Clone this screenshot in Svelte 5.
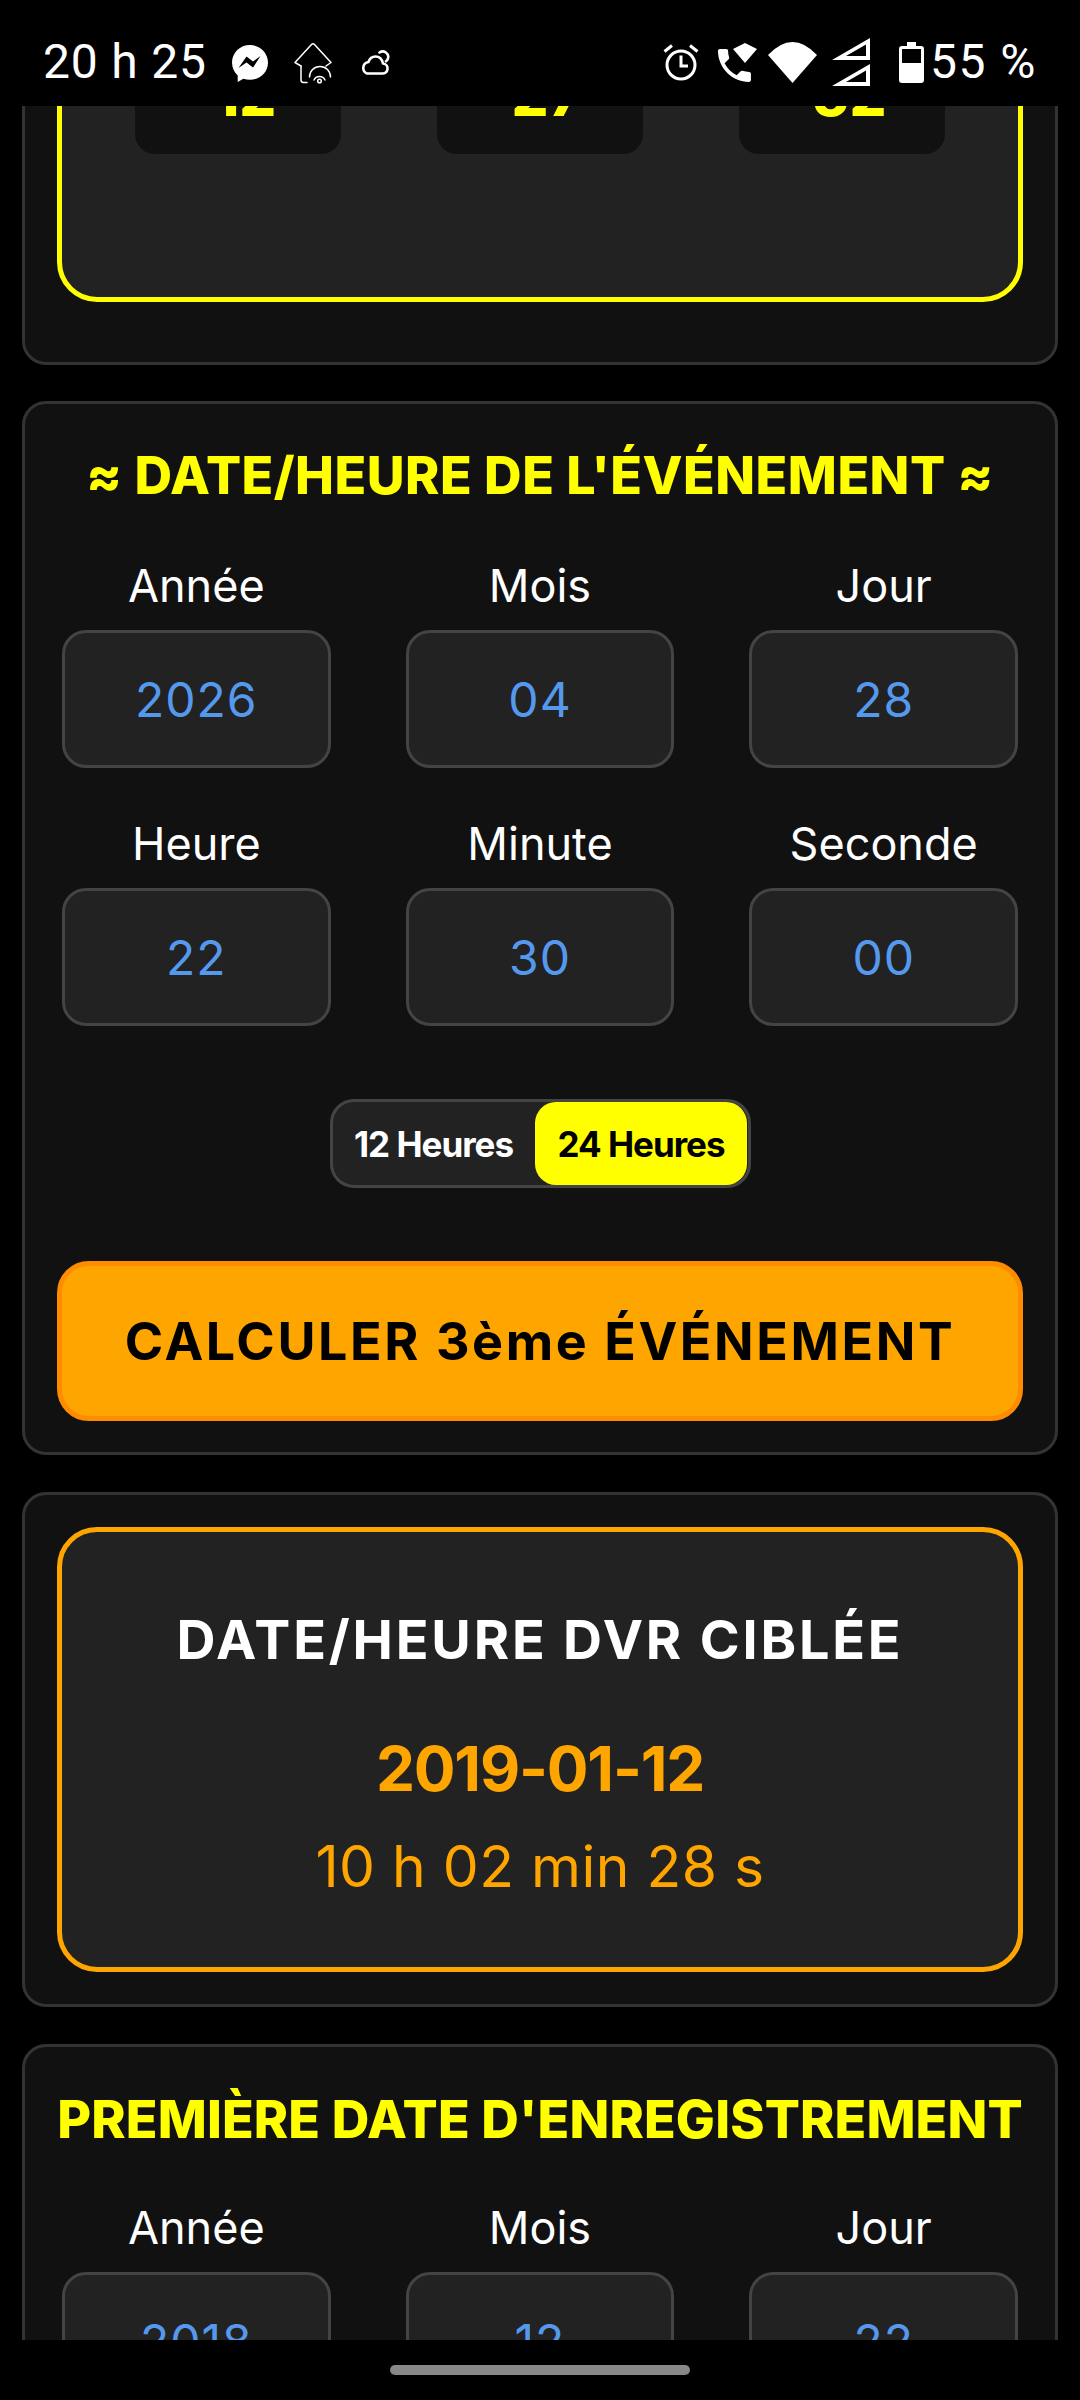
<script>
  const topCells = ["12", "27", "52"];
  const eventRows = [
    [
      { label: "Année", value: "2026" },
      { label: "Mois", value: "04" },
      { label: "Jour", value: "28" },
    ],
    [
      { label: "Heure", value: "22" },
      { label: "Minute", value: "30" },
      { label: "Seconde", value: "00" },
    ],
  ];
  const firstDate = [
    { label: "Année", value: "2018" },
    { label: "Mois", value: "12" },
    { label: "Jour", value: "22" },
  ];
</script>

{#snippet fieldRow(fields)}
  <div class="fields">
    {#each fields as field}
      <div class="field">
        <span class="field-label">{field.label}</span>
        <div class="field-input">{field.value}</div>
      </div>
    {/each}
  </div>
{/snippet}

<div class="screen">
  <header class="status">
    <span class="clock">20 h 25</span>
    <svg class="ic-messenger" viewBox="0 0 36 37" aria-hidden="true">
      <path fill="#fff" d="M18 0C8 0 0 7.600 0 17.600c0 5.300 2.200 9.800 5.700 12.900V37l5.600-3.200c2.100.7 4.300 1 6.700 1 10 0 18-7.300 18-17.200S28 0 18 0z" />
      <path fill="#000" d="M6.500 23l8-11.500 6.500 5 7.500-5.500-7.500 11.500-6.500-5z" />
    </svg>
    <svg class="ic-house" viewBox="0 0 38 41" aria-hidden="true">
      <g fill="none" stroke="#fff" stroke-width="1.500" stroke-linecap="round" stroke-linejoin="round">
        <path d="M7 23L1 19.500 17.500 1.500a2 2 0 0 1 3 0L37 19.500l-5 3.500" />
        <path d="M7 23v14q0 2.500 2.500 2.500H13" />
        <path d="M15.500 34a10 10 0 0 1 21 0" />
        <path d="M20 37a6 6 0 0 1 11 0" />
        <circle cx="25.500" cy="38" r="1.800" />
      </g>
    </svg>
    <svg class="ic-cloud" viewBox="0 0 29 26" aria-hidden="true">
      <g fill="none" stroke="#fff" stroke-width="2.600" stroke-linecap="round" stroke-linejoin="round">
        <path d="M6 24.500h15a5 5 0 0 0 1-10c-1-4.500-4-7-7.500-7-3.500 0-6 2.500-7 5.500a6 6 0 0 0-1.500 11.500z" />
        <path d="M18.500 3.500a5.500 5.500 0 0 1 8.500 6c-.4 1.200-1 2-2 2.800" />
      </g>
    </svg>

    <div class="status-right">
      <svg class="ic-alarm" viewBox="0 0 36 37" aria-hidden="true">
        <g fill="none" stroke="#fff" stroke-width="3">
          <circle cx="18" cy="21" r="14" />
          <path d="M1.500 7.500L9 1.500M27 1.500l7.500 6" />
          <path d="M18 11.500V22h7" />
        </g>
      </svg>
      <svg class="ic-phone" viewBox="0 0 39 40" aria-hidden="true">
        <path fill="#fff" d="M15 6l12-6 12 6-12 14z" />
        <path fill="#fff" transform="translate(-5.500 0.500) scale(1.830)" d="M6.620 10.790c1.440 2.830 3.760 5.140 6.590 6.590l2.200-2.200c.27-.27.67-.36 1.020-.24 1.120.37 2.330.57 3.570.57.55 0 1 .45 1 1V20c0 .55-.45 1-1 1-9.390 0-17-7.610-17-17 0-.55.450-1 1-1h3.500c.55 0 1 .45 1 1 0 1.250.2 2.450.57 3.570.11.350.03.740-.25 1.020l-2.200 2.200z" />
      </svg>
      <svg class="ic-wifi" viewBox="0 0 49 41" aria-hidden="true">
        <path fill="#fff" d="M0 13Q24.500-13 49 13L24.500 41z" />
      </svg>
      <svg class="ic-signal" viewBox="0 0 38 48" aria-hidden="true">
        <path fill="#fff" fill-rule="evenodd" d="M0 22L38 0v22zM14 18h20V6.500z" />
        <path fill="#fff" fill-rule="evenodd" d="M0 48l38-22v22zM14 44h20V32.500z" />
      </svg>
      <svg class="ic-battery" viewBox="0 0 25 41" aria-hidden="true">
        <path fill="#fff" fill-rule="evenodd" d="M8 0h9v4h5q3 0 3 3v31q0 3-3 3H3q-3 0-3-3V7q0-3 3-3h5zM3 7v14h19V7z" />
      </svg>
      <span class="percent">55 %</span>
    </div>
  </header>

  <main class="scroller">
    <div class="page">
      <section class="card card-result">
        <div class="result-box">
          <div class="cells">
            {#each topCells as cell}
              <div class="cell">{cell}</div>
            {/each}
          </div>
        </div>
      </section>

      <section class="card card-event">
        <h2 class="title">≈ DATE/HEURE DE L'ÉVÉNEMENT ≈</h2>
        {#each eventRows as row}
          {@render fieldRow(row)}
        {/each}
        <div class="toggle">
          <span class="toggle-opt">12 Heures</span>
          <span class="toggle-opt active">24 Heures</span>
        </div>
        <button class="calc" type="button">CALCULER 3ème ÉVÉNEMENT</button>
      </section>

      <section class="card card-target">
        <div class="target-box">
          <h3 class="target-title">DATE/HEURE DVR CIBLÉE</h3>
          <div class="target-date">2019-01-12</div>
          <div class="target-time">10 h 02 min 28 s</div>
        </div>
      </section>

      <section class="card card-first">
        <h2 class="title title-first">PREMIÈRE DATE D'ENREGISTREMENT</h2>
        {@render fieldRow(firstDate)}
      </section>
    </div>
  </main>

  <footer class="nav">
    <div class="pill"></div>
  </footer>
</div>

<style>
  :global(body) {
    background: #000;
  }

  .screen {
    display: flex;
    flex-direction: column;
    width: 1080px;
    height: 2400px;
    overflow: hidden;
    background: #000;
    font-family: Inter, "Liberation Sans", sans-serif;
    color: #fff;
  }

  .status {
    flex: none;
    display: flex;
    align-items: flex-start;
    height: 106px;
    padding: 0 43px;
    box-sizing: border-box;
    background: #000;
    font-family: Roboto, "Noto Sans", sans-serif;
    position: relative;
    z-index: 1;
  }

  .clock {
    width: 189px;
    margin-top: 38px;
    font-size: 48px;
    line-height: 48px;
    letter-spacing: 0.8px;
    white-space: nowrap;
  }

  .status svg {
    flex: none;
    display: block;
  }

  .ic-messenger {
    width: 36px;
    height: 37px;
    margin-top: 45px;
  }

  .ic-house {
    width: 38px;
    height: 41px;
    margin-left: 26px;
    margin-top: 43px;
  }

  .ic-cloud {
    width: 29px;
    height: 26px;
    margin-left: 29px;
    margin-top: 49px;
  }

  .status-right {
    display: flex;
    align-items: flex-start;
    margin-left: auto;
  }

  .ic-alarm {
    width: 36px;
    height: 37px;
    margin-top: 44px;
  }

  .ic-phone {
    width: 39px;
    height: 40px;
    margin-left: 19px;
    margin-top: 43px;
  }

  .ic-wifi {
    width: 49px;
    height: 41px;
    margin-left: 11px;
    margin-top: 42px;
  }

  .ic-signal {
    width: 38px;
    height: 48px;
    margin-left: 15px;
    margin-top: 38px;
  }

  .ic-battery {
    width: 25px;
    height: 41px;
    margin-left: 29px;
    margin-top: 42px;
  }

  .percent {
    margin-left: 6px;
    margin-top: 38px;
    font-size: 48px;
    line-height: 48px;
    letter-spacing: 1.5px;
    white-space: nowrap;
  }

  .scroller {
    flex: none;
    height: 2234px;
    overflow: hidden;
  }

  .page {
    display: flex;
    flex-direction: column;
    gap: 37px;
    padding: 0 22px;
    margin-top: -151px;
  }

  .card {
    box-sizing: border-box;
    background: #111;
    border: 3px solid #333;
    border-radius: 24px;
    padding: 32px;
  }

  .card-result {
    height: 410px;
    margin-bottom: -1px;
    padding-bottom: 60px;
  }

  .result-box {
    box-sizing: border-box;
    height: 100%;
    background: #222;
    border: 5px solid #ff0;
    border-radius: 40px;
    padding: 40px 73px 143px;
  }

  .cells {
    display: grid;
    grid-template-columns: repeat(3, 1fr);
    gap: 96px;
    height: 100%;
  }

  .cell {
    display: flex;
    align-items: center;
    justify-content: center;
    padding-left: 14px;
    background: #111;
    border-radius: 20px;
    color: #ff0;
    font-size: 58px;
    font-weight: 800;
  }

  .card-event {
    padding-top: 36px;
    padding-bottom: 31px;
  }

  .title {
    margin: 0 0 50px;
    color: #ff0;
    font-size: 52px;
    font-weight: 800;
    line-height: 72px;
    letter-spacing: 0.5px;
    text-align: center;
    white-space: nowrap;
  }

  .fields {
    display: grid;
    grid-template-columns: repeat(3, 1fr);
    gap: 75px;
    padding: 0 5px;
  }

  .fields + .fields {
    margin-top: 52px;
  }

  .field {
    display: flex;
    flex-direction: column;
    align-items: center;
  }

  .field-label {
    margin-bottom: 20px;
    font-size: 45px;
    line-height: 48px;
  }

  .field-input {
    box-sizing: border-box;
    display: flex;
    align-items: center;
    justify-content: center;
    width: 100%;
    height: 138px;
    background: #222;
    border: 3px solid #444;
    border-radius: 24px;
    color: #5599ee;
    font-size: 48px;
    letter-spacing: 1px;
  }

  .toggle {
    box-sizing: border-box;
    display: flex;
    justify-content: space-between;
    width: 421px;
    height: 89px;
    margin: 73px 0 0 273px;
    padding: 0 1px 0 3px;
    background: #222;
    border: 3px solid #444;
    border-radius: 24px;
  }

  .toggle-opt {
    display: flex;
    align-items: center;
    padding: 0 18px;
    font-size: 35px;
    font-weight: 700;
    letter-spacing: -1px;
    white-space: nowrap;
  }

  .toggle-opt.active {
    width: 212px;
    box-sizing: border-box;
    justify-content: center;
    padding: 0;
    background: #ff0;
    border-radius: 21px;
    color: #000;
  }

  .calc {
    display: block;
    box-sizing: border-box;
    width: 100%;
    height: 160px;
    margin-top: 73px;
    background: #ffa500;
    border: 5px solid #ff8c00;
    border-radius: 32px;
    color: #000;
    font-family: inherit;
    font-size: 52px;
    font-weight: 700;
    letter-spacing: 2.600px;
    white-space: nowrap;
  }

  .card-target {
    padding-bottom: 32px;
  }

  .target-box {
    box-sizing: border-box;
    height: 445px;
    background: #222;
    border: 5px solid #ffa500;
    border-radius: 40px;
    padding-top: 78px;
    text-align: center;
  }

  .target-title {
    margin: 0;
    font-size: 54px;
    font-weight: 700;
    line-height: 60px;
    letter-spacing: 2.800px;
    white-space: nowrap;
  }

  .target-date {
    margin-top: 64px;
    color: #ffa500;
    font-size: 62px;
    font-weight: 700;
    line-height: 70px;
    letter-spacing: -1.200px;
  }

  .target-time {
    margin-top: 33px;
    color: #ffa500;
    font-size: 57px;
    line-height: 60px;
    letter-spacing: 0.5px;
  }

  .card-first {
    padding-top: 43px;
  }

  .title-first {
    margin-bottom: 54px;
    margin-left: -5px;
    margin-right: -5px;
    line-height: 60px;
    letter-spacing: 0.15px;
  }

  .nav {
    flex: none;
    display: flex;
    justify-content: center;
    height: 60px;
    padding-top: 25px;
    box-sizing: border-box;
    background: #000;
  }

  .pill {
    width: 300px;
    height: 10px;
    border-radius: 5px;
    background: #888;
  }
</style>
